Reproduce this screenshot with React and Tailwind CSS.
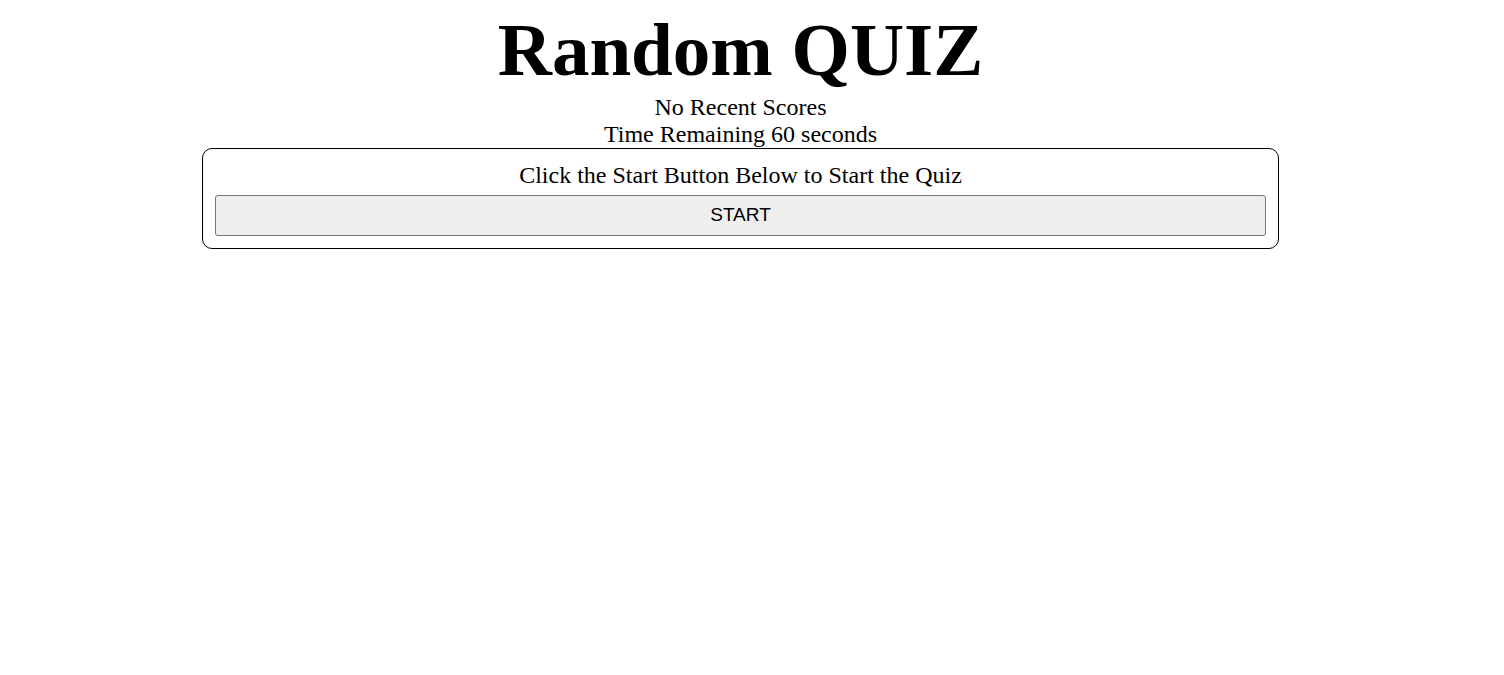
export default function App() {
  return (
    <div className="min-h-screen bg-white font-['Liberation_Serif',serif] text-black">
      <div className="w-[1481px] text-center">
        <h1 className="text-[75px] font-bold leading-[86px] pt-[7px]">Random QUIZ</h1>
        <p className="mt-[1px] text-[24px] leading-[27px]">No Recent Scores</p>
        <p className="text-[24px] leading-[27px]">Time Remaining 60 seconds</p>
        <div className="mx-[202px] rounded-[10px] border border-black px-[12px] pt-[13px] pb-[12px]">
          <p className="text-[24px] leading-[27px] mb-[6px]">Click the Start Button Below to Start the Quiz</p>
          <button className="w-full h-[41px] rounded-[3px] border border-[#767676] bg-[#efefef] font-['Liberation_Sans',sans-serif] text-[19px] text-black">
            START
          </button>
        </div>
      </div>
    </div>
  );
}
